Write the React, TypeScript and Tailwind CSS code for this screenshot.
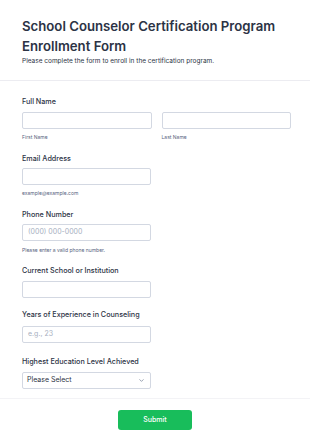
import { ChevronDown } from "lucide-react";

const FONT = { fontFamily: "Inter, 'Noto Sans', sans-serif" };

function Label({ children }: { children: React.ReactNode }) {
  return <div className="text-[7.2px] leading-[10px] font-medium text-[#2c3345]">{children}</div>;
}

function Sub({ children, gap = "mt-[4px]" }: { children: React.ReactNode; gap?: string }) {
  return <div className={gap + " text-[5px] leading-[8px] text-[#57647e]"}>{children}</div>;
}

function Input({ placeholder, wide }: { placeholder?: string; wide?: boolean }) {
  return (
    <div
      className={
        "h-[17px] rounded-[2px] border border-[#d3d8e2] bg-white flex items-center pl-[5px] text-[7px] text-[#a7afc0] " +
        (wide ? "w-full" : "w-[129px]")
      }
    >
      {placeholder}
    </div>
  );
}

export default function App() {
  return (
    <div className="w-[310px] h-[447px] bg-white overflow-hidden" style={FONT}>
      <div className="px-[22px] pt-[16px] pb-[14px] border-b border-[#ececf1]">
        <h1 className="text-[13.2px] leading-[20px] font-semibold text-[#2c3345]">
          School Counselor Certification Program Enrollment Form
        </h1>
        <p className="mt-[1px] text-[6.5px] leading-[9px] text-[#2c3345]">
          Please complete the form to enroll in the certification program.
        </p>
      </div>

      <div className="px-[22px] pr-[19px] pt-[16px]">
        <Label>Full Name</Label>
        <div className="mt-[5px] flex gap-[10px]">
          <div className="flex-1">
            <Input wide />
            <Sub>First Name</Sub>
          </div>
          <div className="flex-1">
            <Input wide />
            <Sub>Last Name</Sub>
          </div>
        </div>

        <div className="mt-[13px]">
          <Label>Email Address</Label>
          <div className="mt-[4px]">
            <Input />
          </div>
          <Sub>example@example.com</Sub>
        </div>

        <div className="mt-[13px]">
          <Label>Phone Number</Label>
          <div className="mt-[4px]">
            <Input placeholder="(000) 000-0000" />
          </div>
          <Sub gap="mt-[5px]">Please enter a valid phone number.</Sub>
        </div>

        <div className="mt-[12px]">
          <Label>Current School or Institution</Label>
          <div className="mt-[5px]">
            <Input />
          </div>
        </div>

        <div className="mt-[12px]">
          <Label>Years of Experience in Counseling</Label>
          <div className="mt-[6px]">
            <Input placeholder="e.g., 23" />
          </div>
        </div>

        <div className="mt-[14px]">
          <Label>Highest Education Level Achieved</Label>
          <div className="mt-[5px] h-[17px] w-[129px] rounded-[2px] border border-[#d3d8e2] flex items-center justify-between pl-[4px] pr-[5px]">
            <span className="text-[7px] text-[#2c3345]">Please Select</span>
            <ChevronDown size={7} strokeWidth={2} className="text-[#57647e]" />
          </div>
        </div>
      </div>

      <div className="mt-[9px] border-t border-[#f3f3f6] flex justify-center pt-[11px]">
        <button className="w-[74px] h-[20px] rounded-[3px] bg-[#18bd5b] text-white text-[7px] font-medium">
          Submit
        </button>
      </div>
    </div>
  );
}
